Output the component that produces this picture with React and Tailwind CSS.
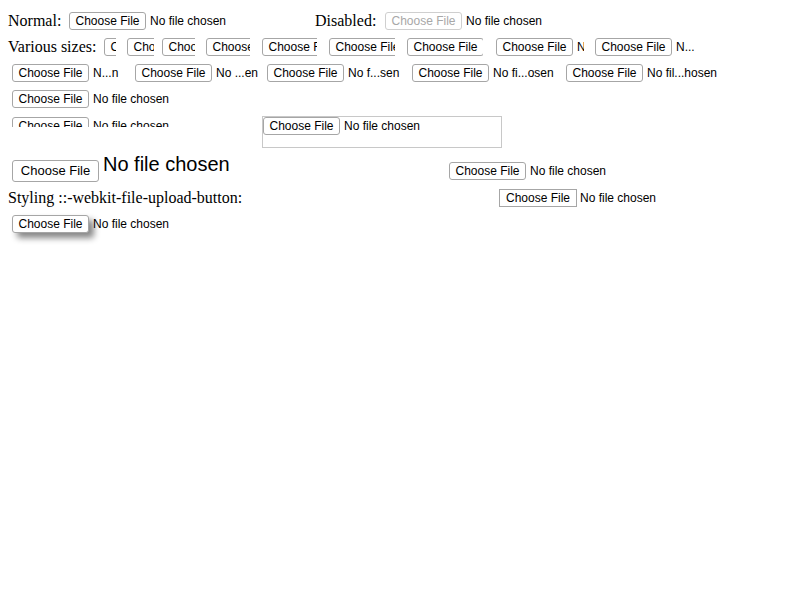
import React from "react";

function Btn({ className = "", disabled = false }) {
  return (
    <span
      className={
        "flex shrink-0 items-center justify-center whitespace-nowrap border bg-white font-['Liberation_Sans',Arial,sans-serif] " +
        (disabled ? "text-[#a8a8a8] border-[#cfcfcf] " : "text-black border-[#a6a6a6] ") +
        className
      }
    >
      Choose File
    </span>
  );
}

function FileInput({ label = "No file chosen", btn = "w-[77px] h-[18px] text-[12px] rounded-[3px]", text = "text-[12px] leading-[18px]", gap = "ml-[4px]", disabled = false }) {
  return (
    <span className="flex shrink-0 items-center whitespace-nowrap">
      <Btn className={btn} disabled={disabled} />
      {label ? (
        <span className={"whitespace-nowrap text-black font-['Liberation_Sans',Arial,sans-serif] " + gap + " " + text}>{label}</span>
      ) : null}
    </span>
  );
}

function Clip({ className, label }) {
  return (
    <div className={"flex shrink-0 overflow-hidden " + className}>
      <FileInput label={label} />
    </div>
  );
}

export default function App() {
  return (
    <div className="w-[800px] h-[600px] bg-white pt-[8px] pl-[8px] text-black font-['Liberation_Serif','Times_New_Roman',serif] text-[16px]">
      {/* Row 1 */}
      <div className="flex h-[26px] items-center">
        <span className="w-[61px] shrink-0 leading-[18px]">Normal:</span>
        <div className="w-[246px] shrink-0">
          <FileInput />
        </div>
        <span className="w-[70px] shrink-0 leading-[18px]">Disabled:</span>
        <FileInput disabled />
      </div>

      {/* Row 2 */}
      <div className="flex h-[26px] items-center">
        <span className="w-[96px] shrink-0 leading-[18px]">Various sizes:</span>
        <Clip className="w-[12px]" label="" />
        <Clip className="w-[27px] ml-[11px]" label="" />
        <Clip className="w-[33px] ml-[8px]" label="" />
        <Clip className="w-[44px] ml-[11px]" label="" />
        <Clip className="w-[55px] ml-[12px]" label="" />
        <Clip className="w-[66px] ml-[12px]" label="" />
        <Clip className="w-[76px] ml-[12px]" label="" />
        <Clip className="w-[88px] ml-[13px]" label="N" />
        <Clip className="w-[99px] ml-[11px]" label="N..." />
      </div>

      {/* Row 3 */}
      <div className="flex h-[26px] items-center pl-[4px]">
        <div className="w-[123px] shrink-0"><FileInput label="N...n" /></div>
        <div className="w-[132px] shrink-0"><FileInput label="No ...en" /></div>
        <div className="w-[145px] shrink-0"><FileInput label="No f...sen" /></div>
        <div className="w-[154px] shrink-0"><FileInput label="No fi...osen" /></div>
        <div className="shrink-0"><FileInput label="No fil...hosen" /></div>
      </div>

      {/* Row 4 */}
      <div className="flex h-[26px] items-center pl-[4px]">
        <FileInput />
      </div>

      {/* Row 5 */}
      <div className="flex h-[36px] items-start pl-[4px]">
        <div className="mt-[5px] h-[10px] w-[160px] shrink-0 overflow-hidden">
          <FileInput />
        </div>
        <div className="ml-[90px] mt-[4px] h-[32px] w-[240px] shrink-0 border border-[#c8c8c8]">
          <FileInput />
        </div>
      </div>

      {/* Row 6 */}
      <div className="flex h-[37px] items-start pl-[4px]">
        <div className="w-[437px] shrink-0 flex items-start">
          <Btn className="mt-[12px] w-[87px] h-[22px] text-[13px] rounded-[3px]" />
          <span className="ml-[4px] mt-[6px] text-[20px] leading-[20px] font-['Liberation_Sans',Arial,sans-serif]">No file chosen</span>
        </div>
        <div className="mt-[14px]">
          <FileInput />
        </div>
      </div>

      {/* Row 7 */}
      <div className="flex h-[26px] items-center">
        <span className="w-[491px] shrink-0 leading-[18px]">Styling ::-webkit-file-upload-button:</span>
        <FileInput btn="w-[78px] h-[18px] text-[12px] rounded-none" gap="ml-[3px]" />
      </div>

      {/* Row 8 */}
      <div className="flex h-[26px] items-center pl-[4px]">
        <span className="flex shrink-0 items-center whitespace-nowrap">
          <Btn className="w-[77px] h-[18px] text-[12px] rounded-[3px] shadow-[5px_5px_6px_#888]" />
          <span className="relative ml-[4px] text-[12px] leading-[18px] font-['Liberation_Sans',Arial,sans-serif]">No file chosen</span>
        </span>
      </div>
    </div>
  );
}
